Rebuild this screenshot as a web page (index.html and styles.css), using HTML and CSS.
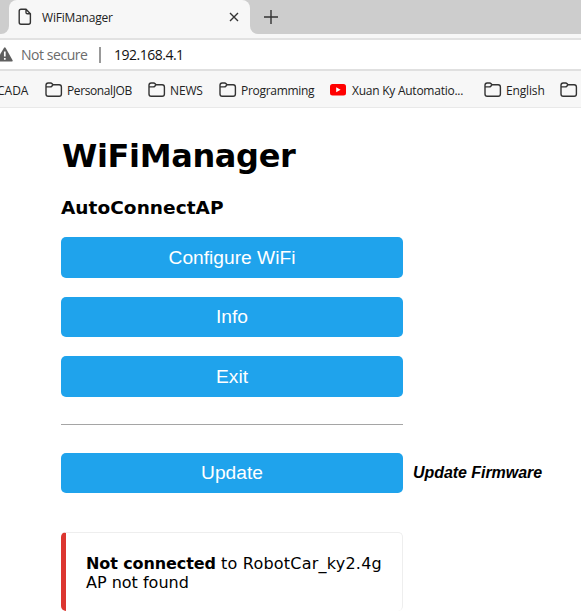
FILE: index.html
```html
<!DOCTYPE html>
<html lang="en">
<head>
<meta charset="utf-8">
<title>WiFiManager</title>
<link rel="stylesheet" href="styles.css">
</head>
<body>
<svg class="defs" width="0" height="0" aria-hidden="true">
  <symbol id="folder" viewBox="0 0 18 16">
    <path d="M1 3.2Q1 1 3.2 1H5.6Q6.5 1 7.1 1.7L8 2.8H14.2Q16.4 2.8 16.4 5V12.1Q16.4 14.3 14.2 14.3H3.2Q1 14.3 1 12.1ZM1 4.9H5.3Q6.2 4.9 6.8 4.2L8 2.8"/>
  </symbol>
</svg>
<header>
  <div class="tabstrip">
    <div class="prev-tab"></div>
    <div class="tab">
      <svg class="page-icon" width="14" height="18" viewBox="0 0 14 18"><path d="M3 1.2H8L12.4 5.8V14.2Q12.4 16.2 10.4 16.2H3Q1.2 16.2 1.2 14.2V3Q1.2 1.2 3 1.2ZM8 1.2V4.4Q8 5.8 9.4 5.8H12.4"/></svg>
      <span class="tab-title">WiFiManager</span>
      <svg class="close" width="10" height="10" viewBox="0 0 10 10"><path d="M1 1L9 9M9 1L1 9"/></svg>
    </div>
    <div class="strip-rest"><svg class="plus" width="14" height="14" viewBox="0 0 14 14"><path d="M7 0V14M0 7H14"/></svg></div>
  </div>
  <div class="address">
    <svg class="warn" width="13" height="15" viewBox="0 0 13 15"><path class="tri" d="M-3 14.5Q-4 14.5 -3.4 13.2L3.9 1Q4.8-.3 5.7 1L12.6 13.2Q13 14.5 12 14.5Z"/><path class="mark" d="M4.8 4.5V9.5M4.8 11V12.7"/></svg>
    <span class="secure">Not secure</span>
    <span class="divider"></span>
    <span class="url">192.168.4.1</span>
  </div>
  <nav class="bookmarks">
    <span class="bm b1">CADA</span>
    <span class="bm b2"><svg class="folder"><use href="#folder"/></svg><span>PersonalJOB</span></span>
    <span class="bm b3"><svg class="folder"><use href="#folder"/></svg><span>NEWS</span></span>
    <span class="bm b4"><svg class="folder"><use href="#folder"/></svg><span>Programming</span></span>
    <span class="bm b5"><svg class="tube" width="16" height="12" viewBox="0 0 16 12"><rect width="16" height="11.5" rx="2.5" fill="#f00"/><path d="M6.2 3.3L10.6 5.8L6.2 8.3Z" fill="#fff"/></svg><span>Xuan Ky Automatio...</span></span>
    <span class="bm b6"><svg class="folder"><use href="#folder"/></svg><span>English</span></span>
    <span class="bm b7"><svg class="folder"><use href="#folder"/></svg></span>
  </nav>
</header>
<main>
  <h1>WiFiManager</h1>
  <h3>AutoConnectAP</h3>
  <button class="first">Configure WiFi</button>
  <button>Info</button>
  <button class="last">Exit</button>
  <hr>
  <div class="update-row"><button>Update</button><em>Update Firmware</em></div>
  <div class="msg"><strong>Not connected</strong> <span class="net">to RobotCar_ky2.4g</span><br><span class="reason">AP not found</span></div>
</main>
</body>
</html>
```
FILE: styles.css
```css
* { box-sizing: border-box; }
html { overflow: hidden; }
body { margin: 0; background: #fff; color: #000; font-family: "DejaVu Sans", Verdana, sans-serif; height: 613px; overflow: hidden; }
.defs { display: block; position: absolute; }
header { font-family: "Open Sans", "Noto Sans", sans-serif; white-space: nowrap; color: #222; }
svg { display: block; flex: none; fill: none; stroke: #333; stroke-width: 1.4; }
.tabstrip { display: flex; height: 34px; background: #f7f7f7; }
.prev-tab { width: 9px; background: #cdcdcd; border-bottom-right-radius: 8px; }
.tab { width: 241px; display: flex; align-items: center; padding: 0 11px 0 9px; background: linear-gradient(#cdcdcd, #cdcdcd) 0 0 / 100% 9px no-repeat; position: relative; }
.tab::before { content: ""; position: absolute; inset: 0; background: #f7f7f7; border-radius: 8px 8px 0 0; }
.tab > * { position: relative; }
.tab-title { font-size: 12px; letter-spacing: -.2px; margin-left: 10px; flex: 1; }
.strip-rest { flex: 1; background: #cdcdcd; border-bottom-left-radius: 8px; padding: 10px 0 0 14px; }
.address { height: 37px; border-top: 4px solid #f7f7f7; box-shadow: inset 0 2px #e2e2e2, inset 0 -2px #e0e0e0; display: flex; align-items: center; font-size: 14px; }
.warn { stroke: none; }
.tri { fill: #5f5f5f; }
.mark { stroke: #fff; stroke-width: 1.7; }
.secure { color: #6b6b6b; margin-left: 8px; width: 78px; letter-spacing: -.45px; }
.divider { width: 2px; height: 16px; background: #999; }
.url { margin-left: 13px; color: #111; letter-spacing: -.5px; }
.bookmarks { height: 37px; background: #f7f7f7; border-bottom: 1px solid #e9e9e9; display: flex; align-items: center; font-size: 12px; overflow: hidden; padding-top: 2px; }
.bm { display: flex; align-items: center; flex: none; }
.bm > span { letter-spacing: -.3px; }
.folder { width: 18px; height: 16px; margin-right: 4px; }
.tube { stroke: none; margin-right: 6px; }
.b1 { width: 48px; margin-left: -3px; }
.b2 { width: 103px; }
.b2 > span { letter-spacing: -.4px; }
.b3 { width: 71px; }
.b3 > span { letter-spacing: -.15px; }
.b4 { width: 111px; }
.b5 { width: 154px; }
.b5 > span { letter-spacing: -.25px; }
.b6 { width: 76px; }
.b6 > span { letter-spacing: -.15px; }
main { width: 342px; margin-left: 61px; padding-top: 28px; }
h1 { margin: 0; font-size: 32px; line-height: 40px; letter-spacing: -.35px; padding-left: 1px; white-space: nowrap; }
h3 { margin: 20px 0 17px; font-size: 18.5px; line-height: 24px; letter-spacing: .05px; white-space: nowrap; }
button { display: block; width: 342px; height: 40px; margin: 0 0 19px; padding: 0; border: 0; border-radius: 5px; background: #1fa3ec; color: #fff; font: 19.2px/40px "Liberation Sans", Arial, sans-serif; flex: none; }
.first, .last { height: 41px; line-height: 41px; }
hr { margin: 27px 0 28px; border: 0; height: 1px; background: #a5a5a5; }
.update-row { display: flex; align-items: center; height: 40px; }
.update-row button { margin: 0; }
em { margin-left: 10px; font: italic bold 16px "Liberation Sans", Arial, sans-serif; letter-spacing: -.05px; white-space: nowrap; }
.msg { margin-top: 39px; height: 79px; border: 1px solid #eee; border-left: 5px solid #dc3630; border-bottom: 0; border-radius: 5px; padding: 21px 0 0 20px; font-size: 16px; line-height: 19px; white-space: nowrap; }
.msg strong { letter-spacing: -.1px; }
.net { letter-spacing: .23px; }
```
